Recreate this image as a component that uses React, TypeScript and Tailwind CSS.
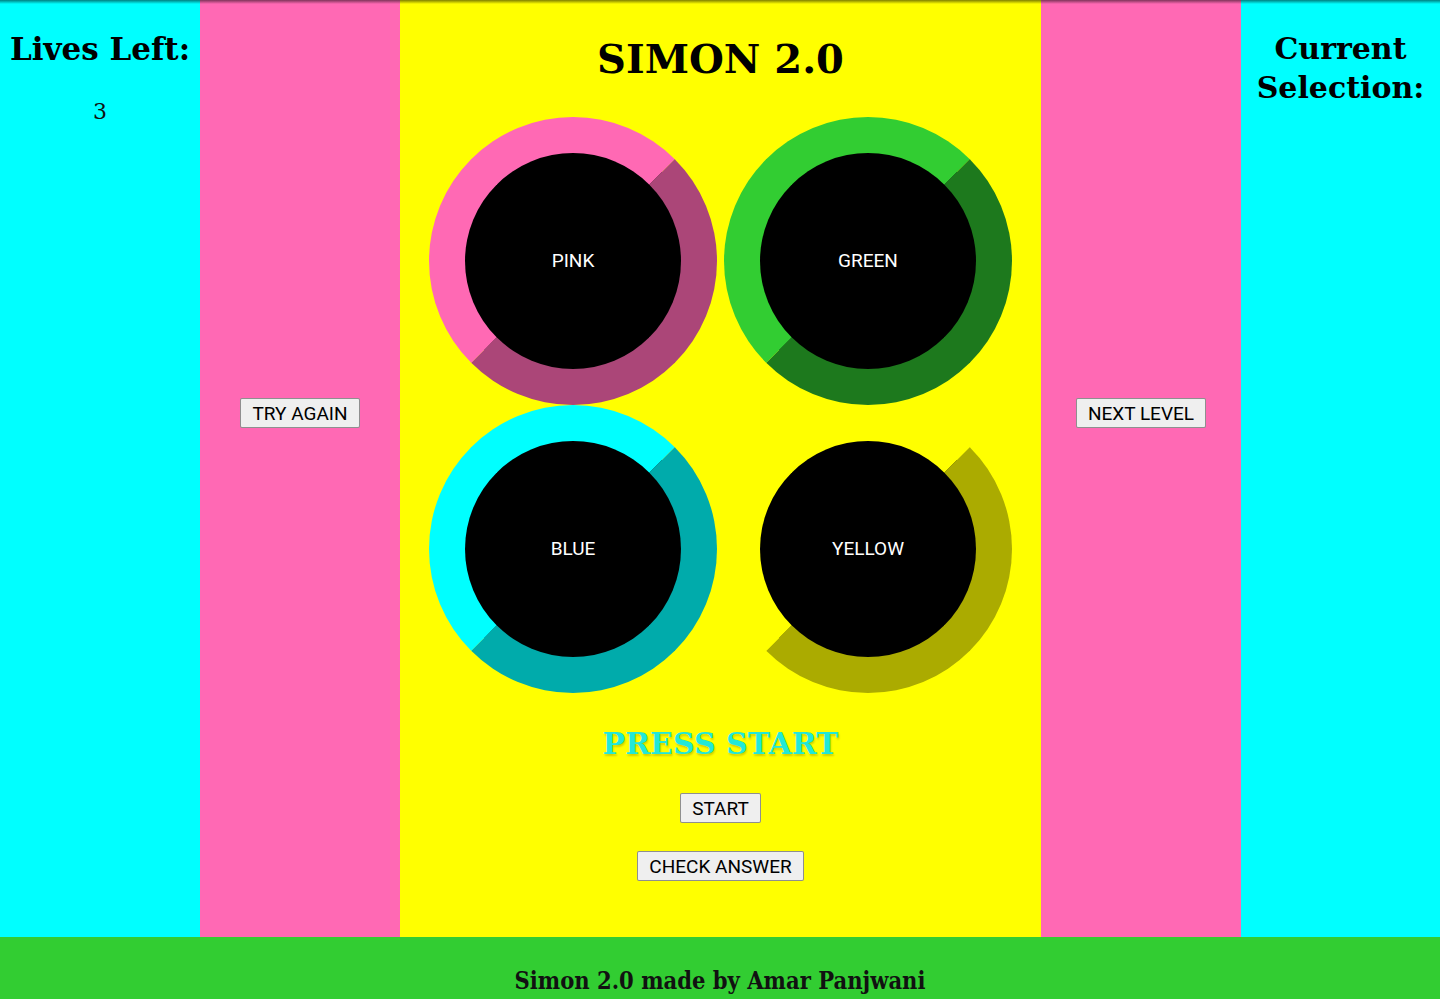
const serif = "font-['DejaVu_Serif','Liberation_Serif',serif]";

function Pad({ label, ring, shade }: { label: string; ring: string; shade: string }) {
  return (
    <div className={`w-[288px] h-[288px] rounded-full border-[36px] bg-black flex items-center justify-center ${ring} ${shade}`}>
      <span className="text-white text-[19px] font-['Roboto',sans-serif]">{label}</span>
    </div>
  );
}

function Btn({ children }: { children: string }) {
  return (
    <button className="h-[30px] px-[11px] bg-[#efefef] border border-black/40 rounded-[2px] text-[19px] leading-none text-black font-['Roboto',sans-serif]">
      {children}
    </button>
  );
}

export default function App() {
  return (
    <div className="relative min-h-screen bg-[#32cd32]">
      {/* status bar shadow */}
      <div className="absolute top-0 left-0 right-0 h-[4px] bg-gradient-to-b from-black/50 to-transparent pointer-events-none" />

      <div className="flex h-[937px]">
        {/* lives */}
        <div className={`w-[200px] bg-[#00ffff] text-center pt-[31px] ${serif}`}>
          <h2 className="text-[31px] leading-[37px] font-bold text-black">Lives Left:</h2>
          <p className="mt-[27px] text-[22px] leading-[33px] text-[#111]">3</p>
        </div>

        <div className="w-[200px] bg-[#ff69b4] flex flex-col items-center pt-[398px]">
          <Btn>TRY AGAIN</Btn>
        </div>

        {/* board */}
        <div className="flex-1 bg-[#ffff00] flex flex-col items-center pt-[35px]">
          <h1 className={`text-[40px] leading-[48px] font-bold text-black ${serif}`}>SIMON 2.0</h1>

          <div className="mt-[34px] grid grid-cols-[288px_288px] gap-x-[7px]">
            <Pad label="PINK" ring="border-t-[#ff69b4] border-l-[#ff69b4]" shade="border-r-[#ab4678] border-b-[#ab4678]" />
            <Pad label="GREEN" ring="border-t-[#32cd32] border-l-[#32cd32]" shade="border-r-[#1d791d] border-b-[#1d791d]" />
            <Pad label="BLUE" ring="border-t-[#00ffff] border-l-[#00ffff]" shade="border-r-[#00abab] border-b-[#00abab]" />
            <Pad label="YELLOW" ring="border-t-[#ffff00] border-l-[#ffff00]" shade="border-r-[#abab00] border-b-[#abab00]" />
          </div>

          <p className={`mt-[33px] text-[30px] leading-[36px] font-bold text-[#22e8d8] [text-shadow:1px_2px_2px_rgba(0,0,0,0.18)] ${serif}`}>
            PRESS START
          </p>

          <div className="mt-[31px]">
            <Btn>START</Btn>
          </div>
          <div className="mt-[28px]">
            <Btn>CHECK ANSWER</Btn>
          </div>
        </div>

        <div className="w-[200px] bg-[#ff69b4] flex flex-col items-center pt-[398px]">
          <Btn>NEXT LEVEL</Btn>
        </div>

        {/* selection */}
        <div className={`w-[199px] bg-[#00ffff] text-center pt-[30px] ${serif}`}>
          <h2 className="text-[30px] leading-[38.5px] font-bold text-black">
            Current Selection:
          </h2>
        </div>
      </div>

      <footer className="bg-[#32cd32] pt-[26px] pb-[20px] text-center">
        <p className="text-[23.5px] leading-[36px] font-bold text-[#111] font-stretch-condensed font-['DejaVu_Serif_Condensed','DejaVu_Serif',serif]">
          Simon 2.0 made by Amar Panjwani
        </p>
      </footer>
    </div>
  );
}
